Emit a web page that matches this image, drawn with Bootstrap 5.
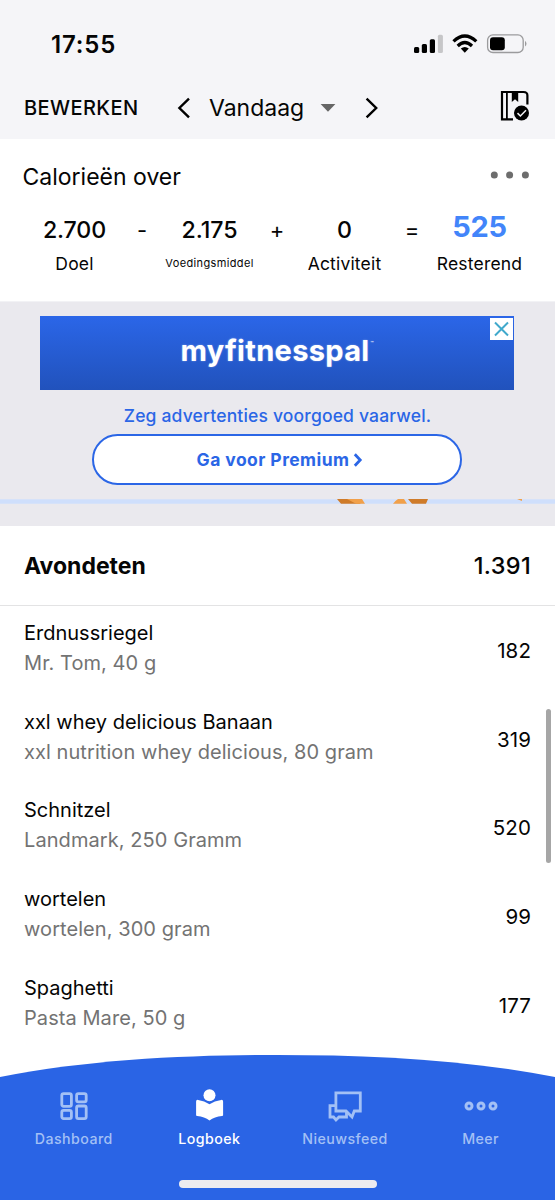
<!DOCTYPE html>
<html lang="nl">
<head>
<meta charset="utf-8">
<meta name="viewport" content="width=device-width, initial-scale=1">
<title>Logboek</title>
<link href="https://cdn.jsdelivr.net/npm/bootstrap@5.3.0/dist/css/bootstrap.min.css" rel="stylesheet">
<style>
body{font-family:Inter,"Liberation Sans",sans-serif;color:#050505;background:#fff;white-space:nowrap}
svg{display:block;flex:none}
.screen{height:1200px;overflow:hidden}
.top-area{height:139px;background:#f5f5f8}
.status-bar{height:76px;padding:13px 28px 0 51px}
.status-icons{margin-top:21px}
.clock{font-size:24px;font-weight:600;letter-spacing:.85px;line-height:63px}
.toolbar{height:63px;padding:0 25.5px 0 24px}
.edit-link{font-size:20px;font-weight:500;letter-spacing:.42px;line-height:64px;width:153px}
.day{font-size:23px;font-weight:400;line-height:62px;width:112px;padding-left:16px;margin-left:2px}
.caret-down{margin-left:15px}
.next-day{margin-left:29px}
.log-icon{margin-top:-4px}
.cal-card{height:162px}
.cal-title{font-size:23px;line-height:30px;padding:23px 25px 0 22.5px}
.cal-title svg{margin-top:-4px}
.sum-row{padding:22.5px 31px 0 30.5px}
.sum-cell{width:88px;display:flex;flex-direction:column;align-items:center}
.sum-op{width:47px;text-align:center;font-size:22px;line-height:30px;padding-top:.5px}
.sum-num{font-size:23.2px;font-weight:500;line-height:30px;letter-spacing:-.1px}
.sum-lab{font-size:17.5px;letter-spacing:.18px;line-height:26px;margin-top:6.5px}
.sum-lab.tiny{font-size:11px;letter-spacing:.36px;margin-top:5.5px}
.sum-num.left-over{font-size:29px;font-weight:700;color:#4285fa;letter-spacing:-.3px;margin-top:-3px;margin-bottom:3px}
.ad-area{height:225px;background:#eae9ee;padding-top:14px;border-top:1px solid #f2f2f5}
.banner{width:474px;height:74px;margin-left:40px;background:linear-gradient(#2b66e8,#2152bc);color:#fff}
.brand{font-size:29px;font-weight:700;letter-spacing:.33px;line-height:70px;text-shadow:0 0 2px #ffffff66}
.brand sup{font-size:5px;font-weight:400;top:-3.2em;letter-spacing:0;margin-left:1px}
.ad-close{top:2px;right:1px;width:23px;height:22px;background:#fff}
.ad-text{font-size:17.5px;font-weight:500;letter-spacing:.17px;line-height:26px;color:#2b66e6;margin-top:12.5px;text-align:center}
.premium{width:370px;height:50.5px;margin:5.5px auto 0 92px;padding:1px 0 0 6px;border:2px solid #2b66e6;border-radius:26px;background:#fff;color:#2b66e6;font-size:17.5px;font-weight:700;letter-spacing:.43px}
.premium svg{margin-left:4px}
.ad-strip{margin-top:14px}
.meal-head{height:80px;padding:1px 24px 0;border-bottom:1px solid #e3e3e4;font-size:23px}
.meal-total{font-size:23.5px;font-weight:500;letter-spacing:.35px}
.food{height:88.7px;padding:12px 24px 0}
.food-name{font-size:20px;line-height:30px}
.food-desc{font-size:20px;line-height:30.5px;color:#737373;letter-spacing:.07px}
.food-kcal{font-size:20.5px;line-height:65px;letter-spacing:.1px}
.scroll-thumb{position:absolute;left:546px;top:709px;width:5px;height:154px;border-radius:3px;background:#a6a6a6}
.tab-area{position:absolute;left:0;top:1055px;width:555px;height:145px;color:#a3c0f5}
.tab-items{position:relative;padding:29px 6px 0 6px}
.tab-item{width:135.6px;font-size:14.2px;font-weight:500;letter-spacing:.45px;line-height:24px;display:flex;flex-direction:column;align-items:center}
.tab-item svg{margin-bottom:-1.5px}
.home-bar{position:absolute;left:178.5px;top:125px;width:198.5px;height:8px;border-radius:4px;background:#edebef}
</style>
</head>
<body>
<div class="screen position-relative">
  <header class="top-area">
    <div class="status-bar d-flex justify-content-between">
      <div class="clock">17:55</div>
      <svg class="status-icons" width="114" height="20" viewBox="0 0 114 20">
        <rect x="1" y="13" width="5.2" height="6" rx="1.5"/><rect x="8.8" y="10" width="5.2" height="9" rx="1.5"/><rect x="16.8" y="5.3" width="5.2" height="13.7" rx="1.5"/><rect x="24.9" y="0.8" width="5" height="18.2" rx="1.5" fill="#c6c6c8"/>
        <g fill="none" stroke="#000" stroke-width="3.3"><path d="M40.5 7.4Q51.8-3.2 63.3 7.4"/><path d="M44.7 12Q51.8 5.2 59 12"/></g>
        <path d="M47.8 14.6Q51.8 11.4 55.8 14.6L51.8 18.7Z"/>
        <rect x="74.6" y=".9" width="35.6" height="17.6" rx="5.3" fill="none" stroke="#9b9b9d" stroke-width="1.3"/><rect x="77" y="3.2" width="14.8" height="13" rx="3"/><path d="M112 6.8Q115 9.7 112 12.5Z" fill="#9b9b9d"/>
      </svg>
    </div>
    <div class="toolbar d-flex align-items-center">
      <div class="edit-link">BEWERKEN</div>
      <svg width="14" height="22" viewBox="0 0 14 22" fill="none" stroke="#000" stroke-width="2.4"><path d="M12 1.6 2.4 11 12 20.4"/></svg>
      <div class="day">Vandaag</div>
      <svg class="caret-down" width="16" height="8" viewBox="0 0 16 8"><path d="M.6 0H15.4L8 7.8Z" fill="#666"/></svg>
      <svg class="next-day" width="14" height="22" viewBox="0 0 14 22" fill="none" stroke="#000" stroke-width="2.4"><path d="M1.6 1.6 11.2 11 1.6 20.4"/></svg>
      <svg class="log-icon ms-auto" width="30" height="31" viewBox="0 0 30 31" fill="none" stroke="#000" stroke-width="2.2"><path d="M13 29.4H2V2H23.5Q27.4 2 27.4 5.5V14.5"/><path d="M6.9 2V29" stroke-width="1.8"/><path d="M11.8 1.5H18.2V12L15 9.3 11.8 12Z" fill="#000" stroke="none"/><circle cx="21.5" cy="23" r="7.5" fill="#000" stroke="none"/><path d="M17.5 23.1 20.4 26 26 20.3" stroke="#f5f5f8" stroke-width="1.5"/></svg>
    </div>
  </header>

  <section class="cal-card">
    <div class="cal-title d-flex justify-content-between align-items-center">
      <span>Calorieën over</span>
      <svg width="40" height="8" viewBox="0 0 40 8" fill="#6d6d6d"><circle cx="4.3" cy="4" r="3.5"/><circle cx="19.6" cy="4" r="3.5"/><circle cx="35.4" cy="4" r="3.5"/></svg>
    </div>
    <div class="sum-row d-flex">
      <div class="sum-cell"><span class="sum-num">2.700</span><span class="sum-lab">Doel</span></div>
      <div class="sum-op">-</div>
      <div class="sum-cell"><span class="sum-num">2.175</span><span class="sum-lab tiny">Voedingsmiddel</span></div>
      <div class="sum-op">+</div>
      <div class="sum-cell"><span class="sum-num">0</span><span class="sum-lab">Activiteit</span></div>
      <div class="sum-op">=</div>
      <div class="sum-cell"><span class="sum-num left-over">525</span><span class="sum-lab">Resterend</span></div>
    </div>
  </section>

  <section class="ad-area">
    <div class="banner position-relative d-flex justify-content-center">
      <span class="brand">myfitnesspal<sup>™</sup></span>
      <span class="ad-close position-absolute"><svg width="23" height="22" viewBox="0 0 23 22" fill="none" stroke="#40a9cc" stroke-width="2"><path d="M5 4.5 18 17.5M18 4.5 5 17.5"/></svg></span>
    </div>
    <div class="ad-text">Zeg advertenties voorgoed vaarwel.</div>
    <div class="premium d-flex align-items-center justify-content-center">Ga voor Premium<svg width="10" height="14" viewBox="0 0 10 14" fill="none" stroke="#2b66e6" stroke-width="2.8"><path d="M1.8 1.3 7.2 7 1.8 12.7"/></svg></div>
    <svg class="ad-strip" width="555" height="5" viewBox="0 0 555 5"><path fill="#cfdffc" d="M0 .2H555V4.7H0Z"/><path fill="#cf7b29" d="M337 0H353L361 4.7H341ZM408 0H428L426 4.7H412Z"/><path fill="#f1a04a" d="M347 0H362L365 4.7H356ZM398 0H404L407 4.7H393Q395 2 398 0ZM517 0H522V2Z"/></svg>
  </section>

  <main>
    <div class="meal-head d-flex justify-content-between align-items-center"><b>Avondeten</b><span class="meal-total">1.391</span></div>
    <div class="food d-flex justify-content-between"><div><div class="food-name">Erdnussriegel</div><div class="food-desc">Mr. Tom, 40 g</div></div><div class="food-kcal">182</div></div>
    <div class="food d-flex justify-content-between"><div><div class="food-name">xxl whey delicious Banaan</div><div class="food-desc">xxl nutrition whey delicious, 80 gram</div></div><div class="food-kcal">319</div></div>
    <div class="food d-flex justify-content-between"><div><div class="food-name">Schnitzel</div><div class="food-desc">Landmark, 250 Gramm</div></div><div class="food-kcal">520</div></div>
    <div class="food d-flex justify-content-between"><div><div class="food-name">wortelen</div><div class="food-desc">wortelen, 300 gram</div></div><div class="food-kcal">99</div></div>
    <div class="food d-flex justify-content-between"><div><div class="food-name">Spaghetti</div><div class="food-desc">Pasta Mare, 50 g</div></div><div class="food-kcal">177</div></div>
  </main>
  <div class="scroll-thumb"></div>

  <nav class="tab-area">
    <svg class="position-absolute top-0 start-0" width="555" height="145" viewBox="0 0 555 145"><path fill="#2a64e5" d="M0 22C92 4 190 0 277.5 0S463 4 555 22V145H0Z"/></svg>
    <div class="tab-items d-flex">
      <div class="tab-item"><svg width="34" height="44" viewBox="0 0 34 44" fill="none" stroke="currentColor" stroke-width="2.8"><rect x="4.8" y="9.7" width="9.6" height="12.6" rx="1.8"/><rect x="19.6" y="9.7" width="9.6" height="8.2" rx="1.8"/><rect x="4.8" y="26.4" width="9.6" height="8.2" rx="1.8"/><rect x="19.6" y="22" width="9.6" height="12.6" rx="1.8"/></svg>Dashboard</div>
      <div class="tab-item text-white"><svg width="34" height="44" viewBox="0 0 34 44" fill="currentColor"><circle cx="17.5" cy="11.2" r="6"/><path transform="translate(.5 0)" d="M3.6 17.500Q3.600 15.500 5.600 15.900 12 16.800 17 20.300 22 16.800 28.600 15.900 30.600 15.500 30.600 17.500V31.200Q30.600 32 29.500 32 22 32.500 17 36.500 12 32.500 4.700 32 3.600 32 3.600 31.200Z"/></svg>Logboek</div>
      <div class="tab-item"><svg width="34" height="44" viewBox="0 0 34 44" fill="none" stroke="currentColor" stroke-width="2.8"><path d="M7.9 8.800H32.300V27H26.300L24 33 18 27H7.900Z"/><path d="M7.9 21.700H2V33H5.500L8 36 11 33H18.500V28"/></svg>Nieuwsfeed</div>
      <div class="tab-item"><svg width="34" height="44" viewBox="0 0 34 44" fill="none" stroke="currentColor" stroke-width="3"><circle cx="5" cy="22" r="3"/><circle cx="17" cy="22" r="3"/><circle cx="29" cy="22" r="3"/></svg>Meer</div>
    </div>
    <div class="home-bar"></div>
  </nav>
</div>
<script src="https://cdn.jsdelivr.net/npm/bootstrap@5.3.0/dist/js/bootstrap.bundle.min.js"></script>
</body>
</html>
